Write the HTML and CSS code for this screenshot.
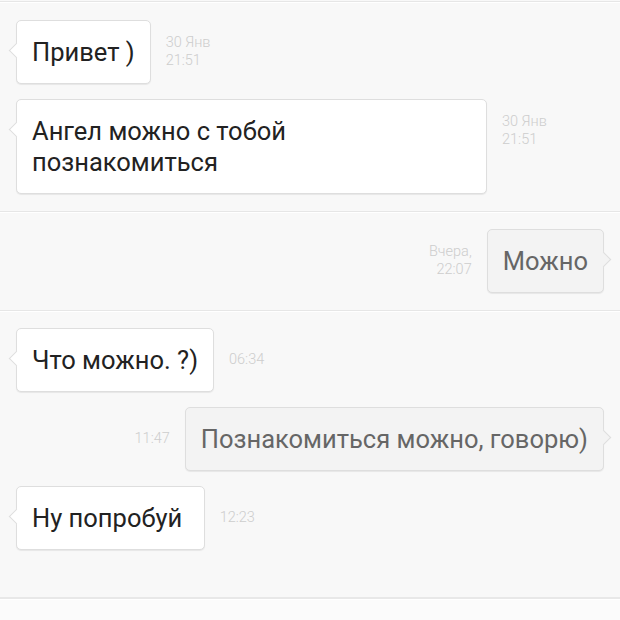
FILE: index.html
```html
<!DOCTYPE html>
<html lang="ru">
<head>
    <meta charset="UTF-8">
    <meta name="viewport" content="width=device-width, initial-scale=1.0">
    <title>Диалог</title>
    <link rel="stylesheet" href="styles.css">
</head>
<body>
    <div class="chat">
        <div class="group">
            <div class="msg in">
                <div class="bubble">Привет )</div>
                <div class="time"><span>30 Янв</span><span>21:51</span></div>
            </div>
            <div class="msg in">
                <div class="bubble">Ангел можно с тобой познакомиться</div>
                <div class="time"><span>30 Янв</span><span>21:51</span></div>
            </div>
        </div>

        <div class="group">
            <div class="msg out">
                <div class="time"><span>Вчера,</span><span>22:07</span></div>
                <div class="bubble">Можно</div>
            </div>
        </div>

        <div class="group last">
            <div class="msg in">
                <div class="bubble">Что можно. ?)</div>
                <div class="time"><span>06:34</span></div>
            </div>
            <div class="msg out">
                <div class="time"><span>11:47</span></div>
                <div class="bubble">Познакомиться можно, говорю)</div>
            </div>
            <div class="msg in">
                <div class="bubble">Ну попробуй&nbsp;</div>
                <div class="time"><span>12:23</span></div>
            </div>
        </div>
        <div class="footer"></div>
    </div>
</body>
</html>
```

FILE: styles.css
```css
body {
    margin: 0;
    background-color: #f8f8f8;
    font-family: Roboto, "Liberation Sans", sans-serif;
}
.chat {
    padding-top: 1px;
}
.group {
    border-top: 1px solid #e6e6e6;
    box-shadow: inset 0 1px 0 #fff;
    padding: 17px 16px 17px;
    display: flex;
    flex-direction: column;
    gap: 15px;
}
.group:first-child {
    padding-top: 18px;
}
.group.last {
    padding-bottom: 47px;
}
.footer {
    border-top: 2px solid #e8e8e8;
    box-shadow: inset 0 1px 0 #fff;
    background-color: #fbfbfb;
    height: 40px;
}
.msg {
    display: flex;
    align-items: flex-start;
    gap: 15px;
}
.msg.out {
    justify-content: flex-end;
}
.bubble {
    position: relative;
    max-width: 471px;
    box-sizing: border-box;
    padding: 16px 15px 15px;
    font-size: 25.5px;
    line-height: 31px;
    border: 1px solid #dedede;
    border-radius: 5px;
    box-shadow: 0 1px 1px rgba(0, 0, 0, 0.07);
}
.in .bubble {
    background-color: #fff;
    color: #222;
}
.out .bubble {
    background-color: #f3f3f3;
    color: #666;
}
.bubble::before {
    content: "";
    position: absolute;
    top: 24px;
    width: 10px;
    height: 10px;
    transform: rotate(45deg);
    border: 1px solid #dedede;
}
.in .bubble::before {
    left: -6px;
    background-color: #fff;
    border-top: none;
    border-right: none;
}
.out .bubble::before {
    right: -6px;
    background-color: #f3f3f3;
    border-bottom: none;
    border-left: none;
}
.time {
    height: 64px;
    display: flex;
    flex-direction: column;
    justify-content: center;
    font-size: 14.5px;
    font-weight: 300;
    line-height: 18px;
    color: #cdcdcd;
    flex-shrink: 0;
}
.out .time {
    text-align: right;
}
```
